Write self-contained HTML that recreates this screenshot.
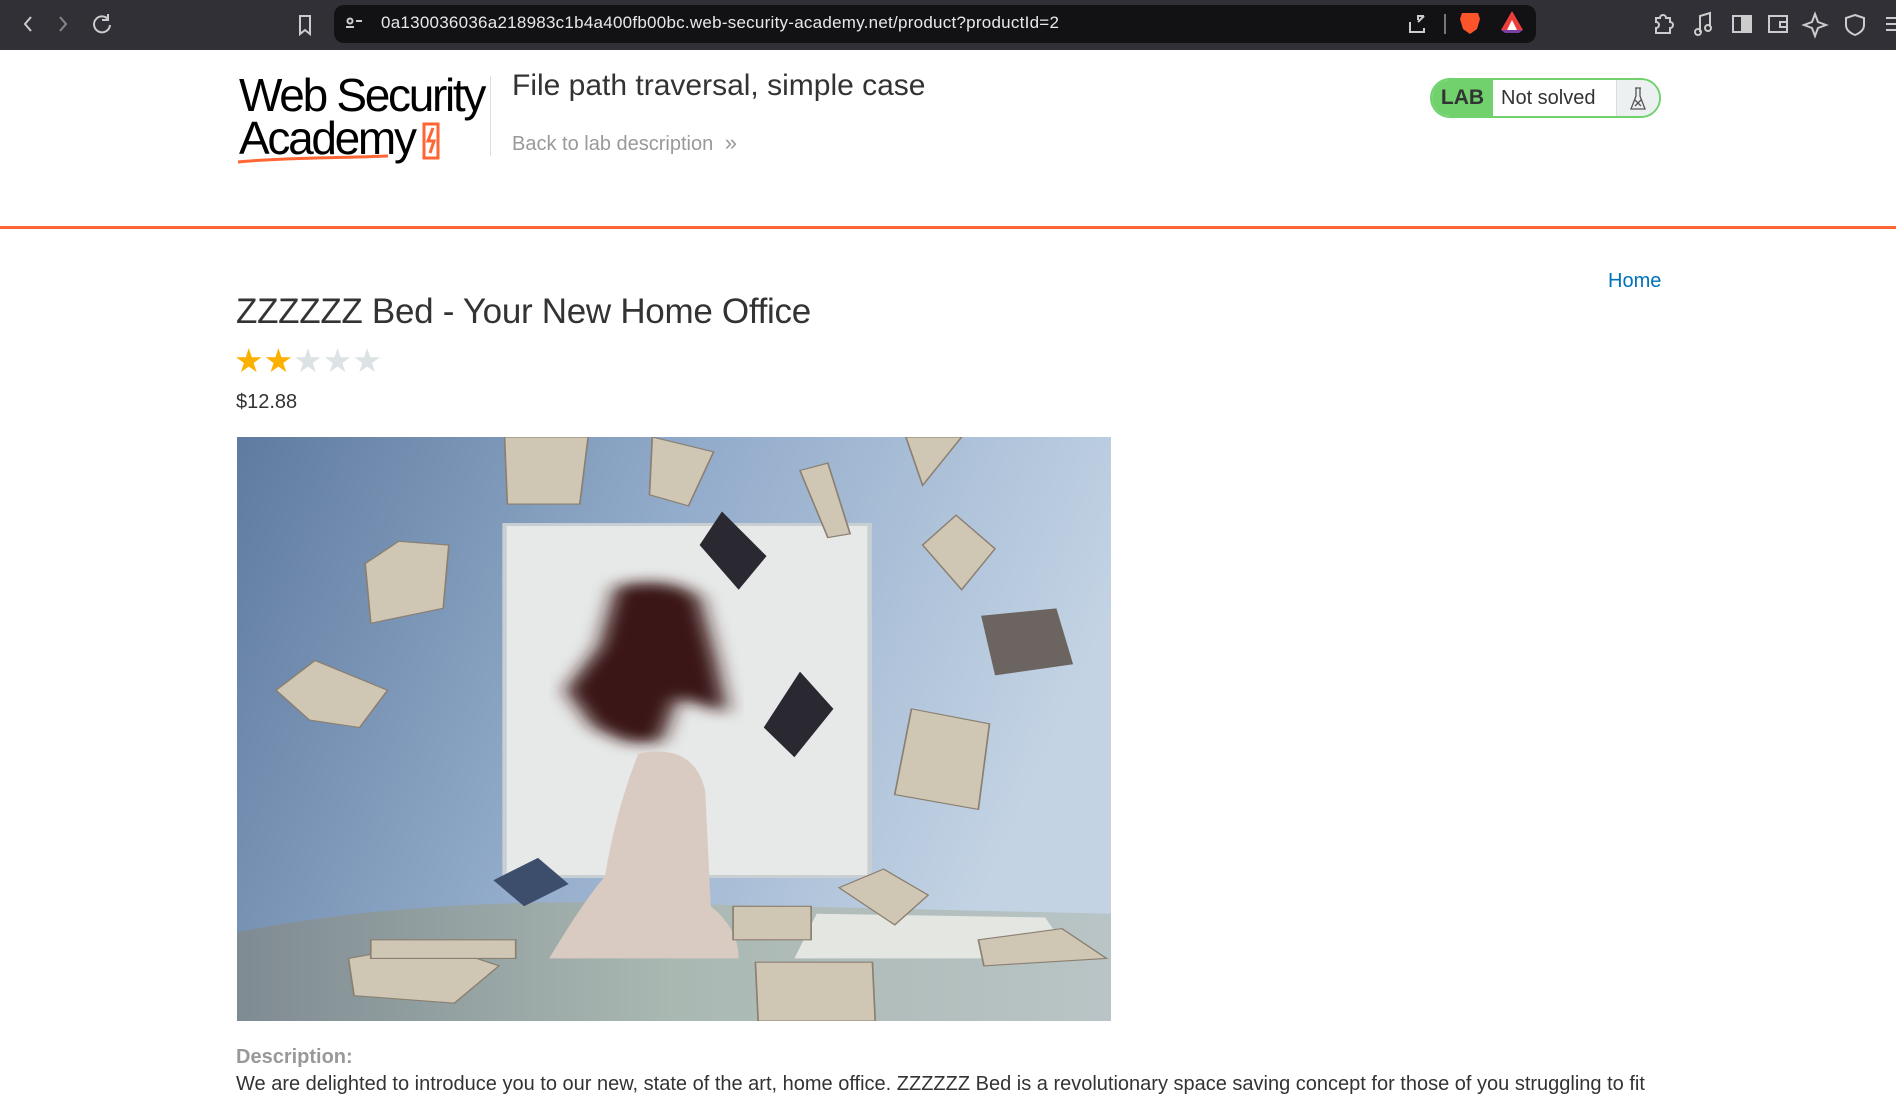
<!DOCTYPE html>
<html><head><meta charset="utf-8"><style>
*{margin:0;padding:0;box-sizing:border-box}
body{width:1896px;height:1088px;overflow:hidden;background:#fff;font-family:"Liberation Sans",Arial,sans-serif;color:#333;position:relative}
.abs{position:absolute}
.chrome{left:0;top:0;width:1896px;height:50px;background:#303036}
.url{left:334px;top:5px;width:1202px;height:38px;background:#121214;border-radius:10px}
.urltext{left:381px;top:13px;font-size:17px;color:#e8e8ea;white-space:nowrap;letter-spacing:0.25px}
</style></head><body>
<div class="abs chrome"></div>
<div class="abs url"></div>
<svg class="abs" style="left:0;top:0" width="1896" height="50">
<g stroke="#ccc" stroke-width="2" fill="none">
<path d="M31 17l-6 7 6 7"/><path d="M60 17l6 7-6 7" stroke="#888"/>
<path d="M108 19a8 8 0 1 0 2 6M108 14v6h-6"/>
<path d="M300 16h10v18l-5-4-5 4z"/>
<circle cx="350" cy="21" r="2.5"/><path d="M346 27h8M356 21h6"/>
<path d="M1418 20v-4h6M1424 16l-6 6M1410 22v10h14v-4" />
<path d="M1445 14v20" stroke="#777"/>
<path d="M1660 18a3 3 0 0 1 6 0h4v4a3 3 0 0 1 0 6v5h-14v-5a3 3 0 0 0 0-6v-4z"/>
<path d="M1700 32v-16l10-3v14"/><circle cx="1698" cy="32" r="3"/><circle cx="1708" cy="28" r="3"/>
<rect x="1733" y="16" width="18" height="16"/>
<rect x="1769" y="16" width="18" height="16"/><path d="M1780 22h7v5h-7z"/>
<path d="M1815 14l3 8 8 3-8 3-3 8-3-8-8-3 8-3z"/>
<path d="M1855 15l9 3v7c0 5-4 8-9 10-5-2-9-5-9-10v-7z"/>
<path d="M1886 18h10M1886 24h10M1886 30h10"/>
</g>
<rect x="1741" y="16" width="10" height="16" fill="#ccc"/>
<path d="M1462 13h16l2 6-3 10-7 5-7-5-3-10z" fill="#fb542b"/>
<path d="M1512 11l11 19h-22z" fill="#ec3f3a"/><path d="M1512 20l5 10h-10z" fill="#fff"/><path d="M1501 30h22l-4 3h-14z" fill="#7b3fa0"/>
</svg>
<div class="abs urltext">0a130036036a218983c1b4a400fb00bc.web-security-academy.net/product?productId=2</div>

<div class="abs" style="left:239px;top:74px;font-size:46px;line-height:43px;color:#000;letter-spacing:-2.3px;font-weight:500">Web Security<br>Academy</div>
<svg class="abs" style="left:236px;top:118px" width="250" height="50">
<path d="M188 6h14v34h-14z" fill="none" stroke="#ff6633" stroke-width="3"/>
<path d="M197 10l-5 13h6l-4 12" fill="none" stroke="#ff6633" stroke-width="3"/>
<path d="M2 44c40-4 100-4 150-6" stroke="#ff6633" stroke-width="3" fill="none"/>
</svg>
<div class="abs" style="left:490px;top:76px;width:1px;height:80px;background:#ddd"></div>
<div class="abs" style="left:512px;top:69px;font-size:30px;color:#333">File path traversal, simple case</div>
<div class="abs" style="left:512px;top:130px;font-size:20px;color:#999">Back to lab description <span style="font-size:22px;margin-left:6px">»</span></div>

<div class="abs" style="left:1430px;top:78px;width:231px;height:40px;border:2px solid #70d16d;border-radius:20px;overflow:hidden;background:#fff">
<div class="abs" style="left:0;top:0;width:61px;height:36px;background:#70d16d;font-weight:bold;font-size:21px;color:#333;text-align:center;line-height:36px">LAB</div>
<div class="abs" style="left:69px;top:0;font-size:20px;line-height:36px;color:#333">Not solved</div>
<div class="abs" style="left:184px;top:0;width:45px;height:36px;background:#ecf0f0;border-left:1px solid #ddd"></div>
<svg class="abs" style="left:196px;top:6px" width="20" height="26"><path d="M7 2h6M8 2v8L3 23h14L12 10V2M7 14l6 6M13 14l-6 6" stroke="#555" stroke-width="1.3" fill="none"/></svg>
</div>

<div class="abs" style="left:0;top:226px;width:1896px;height:3px;background:#ff6633"></div>

<div class="abs" style="left:1608px;top:270px;font-size:20px;color:#0071bc">Home</div>
<div class="abs" style="left:236px;top:292px;font-size:35px;color:#333;letter-spacing:-0.3px">ZZZZZZ Bed - Your New Home Office</div>
<div class="abs" style="left:234px;top:343px;font-size:33px;letter-spacing:0px;line-height:36px"><span style="color:#fcb000">★★</span><span style="color:#dde3e5">★★★</span></div>
<div class="abs" style="left:236px;top:391px;font-size:20px;color:#333">$12.88</div>

<svg class="abs" style="left:237px;top:437px" width="874" height="584" viewBox="0 0 1568 1568" preserveAspectRatio="none">
<defs>
<linearGradient id="bg" x1="0" x2="1" y1="0" y2="0.3"><stop offset="0" stop-color="#5f7b9f"/><stop offset="0.5" stop-color="#93accb"/><stop offset="1" stop-color="#c3d3e4"/></linearGradient>
<linearGradient id="bed" x1="0" x2="1"><stop offset="0" stop-color="#7f8b92"/><stop offset="0.5" stop-color="#aab8b2"/><stop offset="1" stop-color="#b9c4c6"/></linearGradient>
<filter id="bl"><feGaussianBlur stdDeviation="18"/></filter>
</defs>
<rect width="1568" height="1568" fill="url(#bg)"/>
<rect x="480" y="235" width="655" height="945" fill="#e6e9e8" stroke="#c8cfd2" stroke-width="8"/>
<path d="M0 1330 Q300 1240 700 1250 L1568 1280 L1568 1568 L0 1568z" fill="url(#bed)"/>
<path d="M1040 1280 L1450 1290 L1500 1400 L1000 1400z" fill="#e4e6e2"/>
<path d="M680 400 Q780 370 830 430 L860 600 L880 740 L790 700 L760 820 L700 820 L640 780 L590 680 L650 560z" fill="#3a1812" filter="url(#bl)"/>
<path d="M720 850 Q820 820 840 950 L850 1260 Q900 1320 900 1400 L560 1400 Q620 1250 660 1180 Q680 1000 720 850z" fill="#d9cbc2"/>
<g fill="#cfc6b4" stroke="#8a7f70" stroke-width="3">
<path d="M480 0h150l-15 180h-130z"/><path d="M745 0l110 40-45 145-70-30z"/>
<path d="M1200 0h100l-70 130z"/><path d="M1010 90l50-20 40 190-40 10z"/>
<path d="M230 340l60-60 90 10-10 170-130 40z"/><path d="M1230 290l60-80 70 90-60 110z"/>
<path d="M70 680l70-80 130 80-50 100-90-20z"/><path d="M1210 730l140 40-20 230-150-40z"/>
<path d="M200 1400l150-40 120 60-80 100-180-20z"/><path d="M930 1410h210l5 158h-210z"/>
<path d="M1080 1210l80-50 80 70-60 80z"/><path d="M890 1260h140v90h-140z"/>
<path d="M1330 1350l150-30 80 80-220 20z"/><path d="M240 1350h260v50h-260z"/>
</g>
<g fill="#2a2830">
<path d="M870 200l80 120-50 90-70-120z"/><path d="M1010 630l60 100-70 130-55-80z"/>
<path d="M1335 480l135-20 30 150-140 30z" fill="#6b6460"/>
<path d="M460 1190l80-60 55 70-80 60z" fill="#3c4e6b"/>
</g>
</svg>

<div class="abs" style="left:236px;top:1046px;font-size:20px;font-weight:bold;color:#999">Description:</div>
<div class="abs" style="left:236px;top:1073px;font-size:20px;color:#333;white-space:nowrap">We are delighted to introduce you to our new, state of the art, home office. ZZZZZZ Bed is a revolutionary space saving concept for those of you struggling to fit</div>
</body></html>
